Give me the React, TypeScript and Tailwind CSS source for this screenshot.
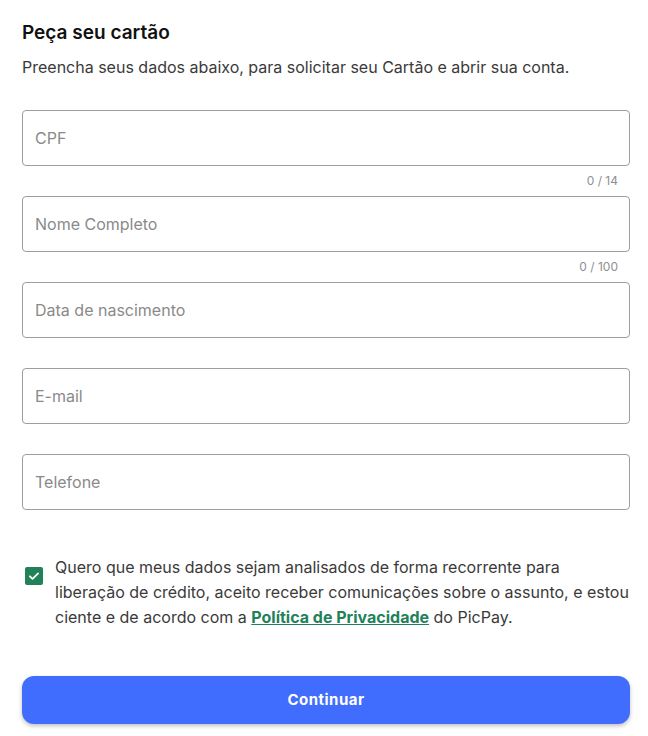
import React, { useState } from 'react';

type Field = { label: string; max?: number };

const fields: Field[] = [
  { label: 'CPF', max: 14 },
  { label: 'Nome Completo', max: 100 },
  { label: 'Data de nascimento' },
  { label: 'E-mail' },
  { label: 'Telefone' },
];

const TextField: React.FC<{ field: Field }> = ({ field }) => {
  const [value, setValue] = useState('');
  return (
    <div>
      <input
        value={value}
        onChange={(e) => setValue(e.target.value)}
        maxLength={field.max}
        placeholder={field.label}
        className="block w-full h-[56px] rounded-[4px] border border-[#9e9e9e] bg-white px-3 text-[16px] text-[#333] placeholder:text-[#8a8a8a] outline-none"
      />
      <div className="h-[30px] flex items-center justify-end pr-3 text-[12px] text-[#8f8f8f]">
        {field.max ? `${value.length} / ${field.max}` : ''}
      </div>
    </div>
  );
};

export default function App() {
  const [agreed, setAgreed] = useState(true);

  return (
    <div className="min-h-screen bg-white pl-[22px] pr-[18px] pt-[21px] text-[#333]" style={{ fontFamily: 'Inter, "Noto Sans", sans-serif' }}>
      <h1 className="text-[19px] leading-[24px] font-semibold text-[#111]">Peça seu cartão</h1>
      <p className="mt-[11px] text-[16px] leading-[22px] text-[#3a3a3a]">
        Preencha seus dados abaixo, para solicitar seu Cartão e abrir sua conta.
      </p>

      <form className="mt-[32px]" onSubmit={(e) => e.preventDefault()}>
        {fields.map((f) => (
          <TextField key={f.label} field={f} />
        ))}

        <label className="mt-[15px] flex items-start gap-3 cursor-pointer">
          <button
            type="button"
            onClick={() => setAgreed(!agreed)}
            className={`mt-3 ml-[3px] flex h-[18px] w-[18px] flex-shrink-0 items-center justify-center rounded-[2px] ${agreed ? 'bg-[#21825a]' : 'border-2 border-[#777] bg-white'}`}
          >
            {agreed && (
              <svg viewBox="0 0 24 24" className="h-[14px] w-[14px]" fill="none" stroke="white" strokeWidth="3" strokeLinecap="round" strokeLinejoin="round">
                <path d="M5 12.5l4.5 4.5L19 7.5" />
              </svg>
            )}
          </button>
          <span className="text-[16px] leading-[25px] text-[#3a3a3a]">
            Quero que meus dados sejam analisados de forma recorrente para liberação de crédito, aceito receber comunicações sobre o assunto, e estou ciente e de acordo com a{' '}
            <a href="#" className="font-bold text-[#21825a] underline">Política de Privacidade</a> do PicPay.
          </span>
        </label>

        <button
          type="submit"
          className="mt-[46px] block h-[48px] w-full rounded-[12px] bg-[#416dff] text-[15px] font-bold tracking-[0.5px] text-white shadow-[0_2px_4px_rgba(0,0,0,0.25)]"
        >
          Continuar
        </button>
      </form>
    </div>
  );
}
